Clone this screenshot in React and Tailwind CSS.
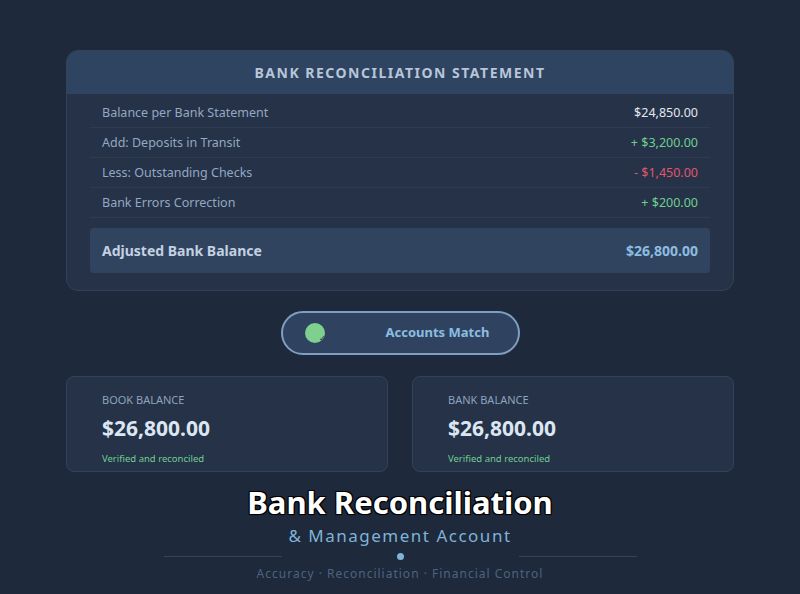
export default function App() {
  const rows = [
    ['Balance per Bank Statement', '$24,850.00', 'text-[#e2e8f0]'],
    ['Add: Deposits in Transit', '+ $3,200.00', 'text-[#6fcf8f]'],
    ['Less: Outstanding Checks', '- $1,450.00', 'text-[#e0566b]'],
    ['Bank Errors Correction', '+ $200.00', 'text-[#6fcf8f]'],
  ];
  return (
    <div className="h-[594px] w-[800px] overflow-hidden bg-[#1e293b] pt-[50px] font-['Liberation_Sans',Arial,sans-serif]">
      <div className="mx-[66px] overflow-hidden rounded-xl border border-[#334258] bg-[#253248]">
        <div className="flex h-[43px] items-center justify-center bg-[#2f4460] text-[14px] font-bold tracking-[1.5px] text-[#b7c6da]">
          BANK RECONCILIATION STATEMENT
        </div>
        <div className="px-[23px] pt-[4px] pb-[17px]">
          {rows.map(([l, v, c]) => (
            <div key={l} className="flex h-[30px] items-center justify-between border-b border-[#2e3b52] px-[12px] pt-[2px] text-[12.5px]">
              <span className="text-[#94a8c2]">{l}</span>
              <span className={c}>{v}</span>
            </div>
          ))}
          <div className="mt-[10px] flex h-[45px] items-center justify-between rounded bg-[#31445f] px-[12px] text-[14px] font-bold">
            <span className="text-[#c3d1e2]">Adjusted Bank Balance</span>
            <span className="text-[#8cbde0]">$26,800.00</span>
          </div>
        </div>
      </div>
      <div className="mt-[20px] flex justify-center">
        <div className="relative flex h-[44px] w-[239px] items-center rounded-full border-2 border-[#7f9fc0] bg-[#2f4360]">
          <div className="relative ml-[22px] h-[20px] w-[20px] rounded-full bg-[#7fcf8e]">
            <span className="absolute right-[-1px] bottom-[1px] text-[8px] leading-none text-[#1e293b]">✓</span>
          </div>
          <span className="ml-[61px] text-[13px] font-bold text-[#8cbde0]">Accounts Match</span>
        </div>
      </div>
      <div className="mx-[66px] mt-[21px] flex gap-[24px]">
        {['BOOK BALANCE', 'BANK BALANCE'].map((t) => (
          <div key={t} className="h-[96px] flex-1 rounded-lg border border-[#334258] bg-[#253248] pt-[15px] pl-[35px]">
            <div className="text-[11px] text-[#8ea3bd]">{t}</div>
            <div className="mt-[4px] text-[21px] font-bold text-[#dce6f2]">$26,800.00</div>
            <div className="mt-[8px] text-[9.5px] text-[#6fcf8f]">Verified and reconciled</div>
          </div>
        ))}
      </div>
      <div className="mt-[12px] text-center text-[31px] leading-[36px] font-bold text-white [text-shadow:0_0_2px_#000,1px_1px_0_#000,-1px_-1px_0_#000,1px_-1px_0_#000,-1px_1px_0_#000] font-['Liberation_Sans',Arial,sans-serif]">
        Bank Reconciliation
      </div>
      <div className="mt-[3px] text-center text-[17px] tracking-[1.5px] text-[#7fb3d8]">& Management Account</div>
      <div className="mt-[4px] flex items-center justify-center">
        <div className="h-px w-[118px] bg-[#34445c]" />
        <div className="mx-[115px] h-[7px] w-[7px] rounded-full bg-[#7fb3d8]" />
        <div className="h-px w-[118px] bg-[#34445c]" />
      </div>
      <div className="mt-[5px] text-center text-[12px] tracking-[1px] text-[#4d6480]">
        Accuracy · Reconciliation · Financial Control
      </div>
    </div>
  );
}
